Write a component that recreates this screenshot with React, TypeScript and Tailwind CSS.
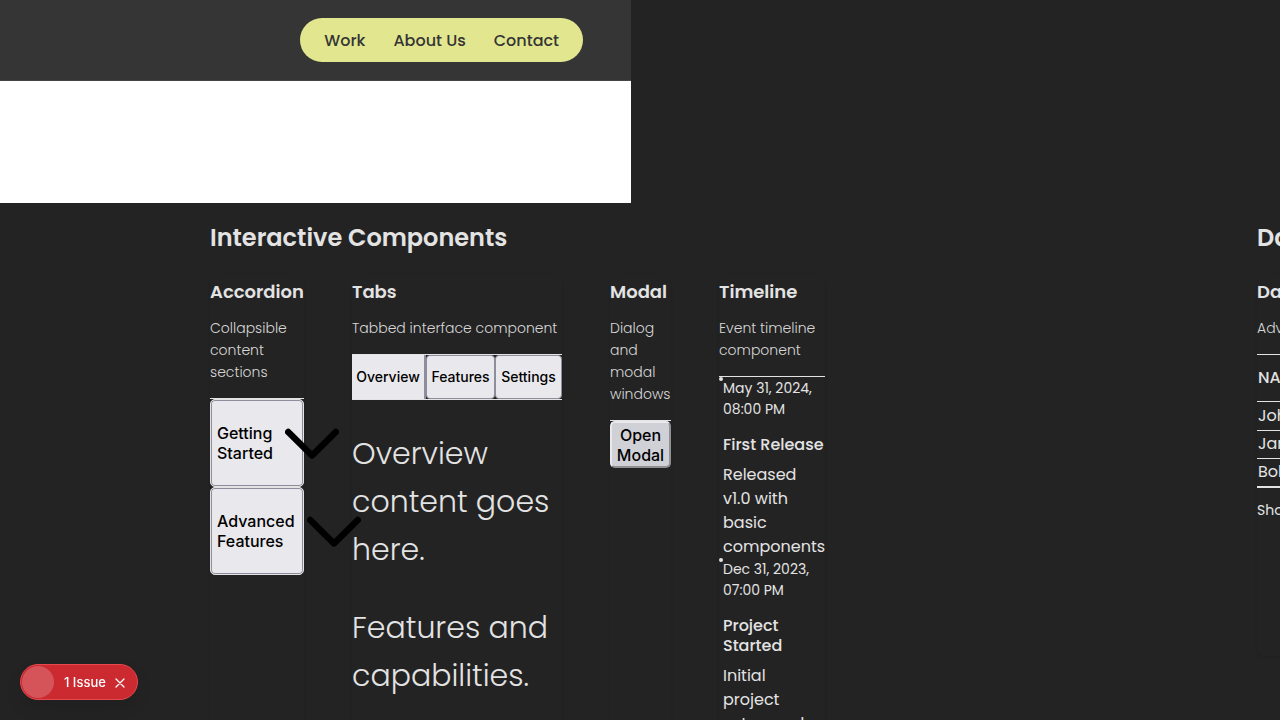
import type { ReactNode } from 'react';

const card = 'shrink-0 rounded-lg pt-1 shadow-[0_1px_3px_rgba(0,0,0,0.1)]';

function Card({ title, text, width, children }: { title: string; text: string; width: string; children: ReactNode }) {
  return (
    <article className={`${card} ${width}`}>
      <h3 className="whitespace-nowrap text-lg font-semibold leading-[26px]">{title}</h3>
      <p className="mb-[15px] mt-3 text-sm font-light leading-[22px] text-[#d6d6d6]">{text}</p>
      <div className="border-t border-[#e3e3e3]">{children}</div>
    </article>
  );
}

function AccordionItem({ label }: { label: string }) {
  return (
    <button
      type="button"
      aria-expanded="false"
      className="flex h-[88px] w-full items-center gap-3 rounded-[5px] border border-[#e3e3e3] bg-[#e9e8ed] pl-[6px] text-left font-[Inter,Roboto,sans-serif] text-base font-[450] leading-5 text-black shadow-[inset_0_0_0_1px_#8f8d9c]"
    >
      <span className="w-min">{label}</span>
      <svg viewBox="0 0 54 31" className="relative z-10 h-[31px] w-[54px] shrink-0" fill="none" stroke="black" strokeWidth="6.500" strokeLinecap="round" strokeLinejoin="round" aria-hidden="true">
        <path d="M3.250 4L27 27.500L50.750 4" />
      </svg>
    </button>
  );
}

function Event({ date, title, text }: { date: string; title: string; text: string }) {
  return (
    <li className="relative pl-1">
      <span className="absolute left-0 -top-px size-1 rounded-full bg-[#e3e3e3]" />
      <time className="block text-sm leading-[21px]">{date}</time>
      <h4 className="mt-[15px] text-base font-medium leading-5">{title}</h4>
      <p className="mt-2 text-base leading-6">{text}</p>
    </li>
  );
}

export default function App() {
  return (
    <div className="relative h-screen overflow-hidden bg-[#232323] font-[Poppins,Inter,sans-serif] text-[#e3e3e3]">
      <header className="flex h-[81px] w-[49.3%] items-center justify-end border-b border-[#474444] bg-[#353535] pr-12">
        <nav className="flex h-11 items-center gap-7 rounded-full bg-[#e2e78f] px-6 pt-px font-medium text-[#353535]">
          <a href="#work">Work</a>
          <a href="#about">About Us</a>
          <a href="#contact">Contact</a>
        </nav>
      </header>
      <div className="h-[122px] w-[49.3%] bg-white" />

      <main className="flex pl-[210px] pt-[17px]">
        <section className="w-[1047px] shrink-0">
          <h2 className="text-2xl font-semibold leading-9">Interactive Components</h2>
          <div className="mt-[19px] flex gap-12">
            <Card title="Accordion" text="Collapsible content sections" width="w-[94px]">
              <AccordionItem label="Getting Started" />
              <AccordionItem label="Advanced Features" />
            </Card>

            <Card title="Tabs" text="Tabbed interface component" width="w-[210px]">
              <div role="tablist" className="flex h-[45px] border-b border-[#e3e3e3] font-[Inter,Roboto,sans-serif] text-sm font-[450] text-black">
                <button type="button" role="tab" aria-selected="true" className="w-[74px] border-r-2 border-[#8f8d9c] bg-[#e9e8ed]">Overview</button>
                <button type="button" role="tab" aria-selected="false" className="w-[69px] rounded-[4px] border border-[#8f8d9c] bg-[#e9e8ed]">Features</button>
                <button type="button" role="tab" aria-selected="false" className="w-[67px] rounded-[4px] border border-[#8f8d9c] bg-[#e9e8ed]">Settings</button>
              </div>
              <div role="tabpanel" className="mt-[30px] text-[30px] font-light leading-[48px]">
                <p>Overview content goes here.</p>
                <p className="mt-[30px]">Features and capabilities.</p>
              </div>
            </Card>

            <Card title="Modal" text="Dialog and modal windows" width="w-[61px]">
              <button type="button" className="h-[47px] w-full rounded-[5px] border-2 border-b-[#909093] border-l-[#e9e8ed] border-r-[#909093] border-t-[#e9e8ed] bg-[#d0d0d7] font-[Inter,Roboto,sans-serif] text-base font-[450] leading-5 text-black">
                Open Modal
              </button>
            </Card>

            <Card title="Timeline" text="Event timeline component" width="w-[106px]">
              <ol className="pt-px">
                <Event date="May 31, 2024, 08:00 PM" title="First Release" text="Released v1.0 with basic components" />
                <Event date="Dec 31, 2023, 07:00 PM" title="Project Started" text="Initial project setup and planning" />
              </ol>
            </Card>
          </div>
        </section>

        <section className="w-[600px] shrink-0">
          <h2 className="text-2xl font-semibold leading-9">Data Display</h2>
          <div className="mt-[19px] flex h-[381px]">
            <Card title="Data Table" text="Advanced data table" width="w-[500px]">
              <table className="w-full border-b-2 border-[#e3e3e3] text-left">
                <thead>
                  <tr className="h-[46px]"><th className="pl-px font-medium">NAME</th></tr>
                </thead>
                <tbody>
                  <tr className="h-[29px] border-t border-[#e3e3e3]"><td className="pl-px">John</td></tr>
                  <tr className="h-[28px] border-t border-[#e3e3e3]"><td className="pl-px">Jane</td></tr>
                  <tr className="h-[29px] border-t border-[#e3e3e3]"><td className="pl-px">Bob</td></tr>
                </tbody>
              </table>
              <p className="mt-3 text-sm leading-[21px]">Showing 3 entries</p>
            </Card>
          </div>
        </section>
      </main>

      <div className="fixed bottom-5 left-5 flex h-9 items-center rounded-full border border-[#e5484d] bg-[#ca2a30] pl-px pr-3 font-[Inter,sans-serif] text-[13px] font-medium text-white shadow-[0_8px_16px_rgba(0,0,0,0.1)]">
        <span className="size-8 rounded-full bg-[#d5545a]" />
        <button type="button" className="ml-[10px] pt-px">1 Issue</button>
        <button type="button" aria-label="Dismiss" className="ml-[9px] pt-px">
          <svg viewBox="0 0 10 10" className="size-[10px]" stroke="white" strokeWidth="1.3" strokeLinecap="round" aria-hidden="true">
            <path d="M1 1L9 9M9 1L1 9" />
          </svg>
        </button>
      </div>
    </div>
  );
}
